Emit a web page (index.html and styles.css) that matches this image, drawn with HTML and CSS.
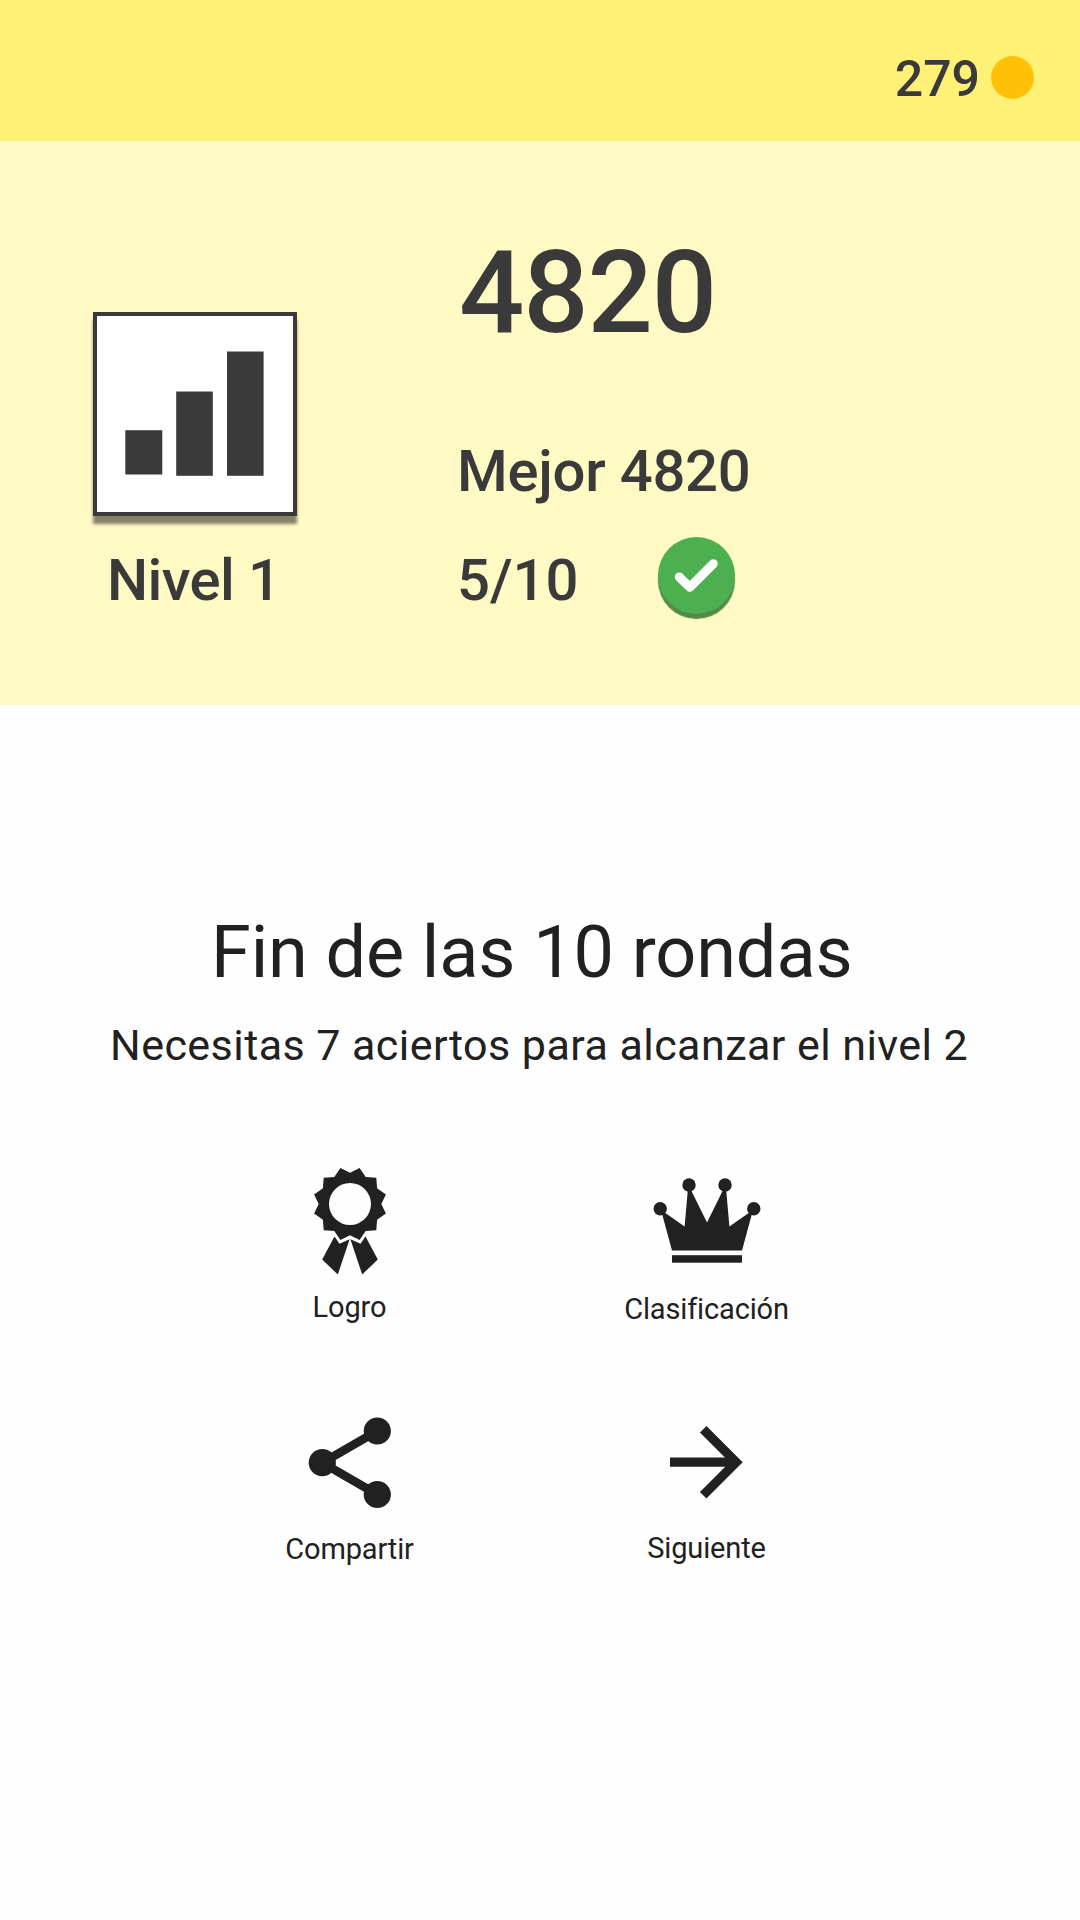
FILE: index.html
```html
<!DOCTYPE html>
<html lang="es">
<head>
    <meta charset="UTF-8">
    <title>Fin de las 10 rondas</title>
    <link rel="stylesheet" href="styles.css">
</head>
<body>
    <header class="topbar">
        <span class="coins">279</span>
        <span class="coin"></span>
    </header>

    <section class="summary">
        <div class="level">
            <div class="level-box">
                <svg width="196" height="196" viewBox="0 0 196 196" fill="#3a3a3a">
                    <rect x="28.3" y="114.2" width="37" height="44.3"/>
                    <rect x="79.2" y="75.5" width="36.6" height="84.3"/>
                    <rect x="130" y="35.5" width="36.6" height="124.3"/>
                </svg>
            </div>
            <div class="level-name">Nivel 1</div>
        </div>
        <div class="results">
            <div class="score">4820</div>
            <div class="best">Mejor 4820</div>
            <div class="hits">
                <span class="hits-count">5/10</span>
                <span class="check">
                    <svg width="77" height="77" viewBox="0 0 77 77">
                        <path d="M21.3 40 L31.8 50.3 L55.3 26.8" fill="none" stroke="#fff" stroke-width="9" stroke-linecap="round" stroke-linejoin="round"/>
                    </svg>
                </span>
            </div>
        </div>
    </section>

    <main class="end">
        <h1>Fin de las 10 rondas</h1>
        <p class="hint">Necesitas 7 aciertos para alcanzar el nivel 2</p>

        <div class="actions">
            <div class="action">
                <svg width="120" height="120" viewBox="0 0 120 120" fill="#212121">
                    <path fill-rule="evenodd" d="M60 12.7 L69.6 8.1 L75.7 16.9 L86.3 17.7 L87.1 28.3 L95.9 34.4 L91.3 44 L95.9 53.6 L87.1 59.7 L86.3 70.3 L75.7 71.1 L69.6 79.9 L60 75.3 L50.4 79.9 L44.3 71.1 L33.7 70.3 L32.9 59.7 L24.1 53.6 L28.7 44 L24.1 34.4 L32.9 28.3 L33.7 17.7 L44.3 16.9 L50.4 8.1 Z M60 23 A21 21 0 1 0 60 65 A21 21 0 1 0 60 23 Z"/>
                    <path d="M44.5 76.5 L49.5 83.7 L59.6 79.3 L47.8 114.5 L32.2 99.5 Z"/>
                    <path d="M75.5 76.5 L70.5 83.7 L60.4 79.3 L72.2 114.5 L87.8 99.5 Z"/>
                </svg>
                <span class="label">Logro</span>
            </div>
            <div class="action">
                <svg width="120" height="120" viewBox="0 0 120 120" fill="#212121">
                    <circle cx="42" cy="25" r="6.7"/>
                    <circle cx="78" cy="25" r="6.7"/>
                    <circle cx="13.2" cy="48.7" r="6.7"/>
                    <circle cx="106.8" cy="48.7" r="6.7"/>
                    <path d="M14 50 L37.6 66.5 L41 28 H43 L60 62.5 L77 28 H79 L82.4 66.5 L106 50 L95 90.5 H25 Z"/>
                    <rect x="25" y="95.2" width="70" height="7.5"/>
                </svg>
                <span class="label label-ranking">Clasificación</span>
            </div>
            <div class="action">
                <svg width="120" height="120" viewBox="0 0 120 120" fill="#212121">
                    <path d="M87.3 31 L32.3 62.7 L87.3 94.5" fill="none" stroke="#212121" stroke-width="8.6"/>
                    <circle cx="32.3" cy="62.7" r="13.6"/>
                    <circle cx="87.3" cy="31" r="13.6"/>
                    <circle cx="87.3" cy="94.5" r="13.6"/>
                </svg>
                <span class="label label-share">Compartir</span>
            </div>
            <div class="action">
                <svg width="120" height="120" viewBox="0 0 120 120" fill="none" stroke="#212121" stroke-width="9.2">
                    <path d="M23 62.2 H90"/>
                    <path d="M56.2 29.2 L89.2 62.2 L56.2 95.2"/>
                </svg>
                <span class="label label-next">Siguiente</span>
            </div>
        </div>
    </main>
</body>
</html>
```

FILE: styles.css
```css
* {
    box-sizing: border-box;
}

body {
    margin: 0;
    width: 1080px;
    height: 1920px;
    background-color: #fefefe;
    font-family: Roboto, "Liberation Sans", sans-serif;
    color: #212121;
    white-space: nowrap;
}

svg {
    display: block;
}

.topbar {
    display: flex;
    justify-content: flex-end;
    gap: 11px;
    height: 141px;
    padding: 54px 46px 0 0;
    background-color: #fff176;
}

.coins {
    font-size: 50px;
    line-height: 50px;
    font-weight: 500;
    color: #3a3a3a;
}

.coin {
    width: 43px;
    height: 43px;
    margin-top: 2px;
    border-radius: 50%;
    background-color: #ffc107;
}

.summary {
    display: flex;
    height: 564px;
    background-color: #fff9c4;
    color: #3a3a3a;
    font-weight: 500;
}

.level {
    width: 457px;
    padding: 171px 0 0 93px;
}

.level-box {
    width: 204px;
    height: 204px;
    border: 4px solid #3a3a3a;
    background-color: #fff;
    box-shadow: 0 8px 3px rgba(0, 0, 0, 0.48);
}

.level-name {
    margin: 35px 0 0 14px;
    font-size: 58px;
    line-height: 58px;
    letter-spacing: -0.6px;
}

.results {
    padding-top: 95px;
}

.score {
    padding-left: 2px;
    font-size: 115px;
    line-height: 114px;
    letter-spacing: -1.1px;
}

.best {
    margin-top: 92px;
    font-size: 58px;
    line-height: 58px;
    letter-spacing: -0.25px;
}

.hits {
    display: flex;
    justify-content: space-between;
    width: 278px;
    margin-top: 37px;
}

.hits-count {
    margin-top: 14px;
    font-size: 58px;
    line-height: 58px;
}

.check {
    width: 77px;
    height: 77px;
    border-radius: 50%;
    background-color: #4caf50;
    box-shadow: 0 5px 1px #54894a;
}

.end {
    padding-top: 212px;
}

h1 {
    margin: 0 0 0 211px;
    font-size: 72px;
    line-height: 72px;
    font-weight: 400;
    letter-spacing: -0.1px;
}

.hint {
    margin: 34px 0 0 110px;
    font-size: 43px;
    line-height: 44px;
    letter-spacing: 0.45px;
}

.actions {
    display: grid;
    grid-template-columns: 357px 357px;
    grid-template-rows: 240px 240px;
    margin: 93px 0 0 171px;
}

.action {
    display: flex;
    flex-direction: column;
    align-items: center;
}

.label {
    margin-top: 10px;
    font-size: 29px;
    line-height: 34px;
    letter-spacing: -0.15px;
}

.label-ranking {
    margin-top: 12px;
}

.label-share {
    margin-top: 12px;
}

.label-next {
    margin-top: 11px;
}
```
